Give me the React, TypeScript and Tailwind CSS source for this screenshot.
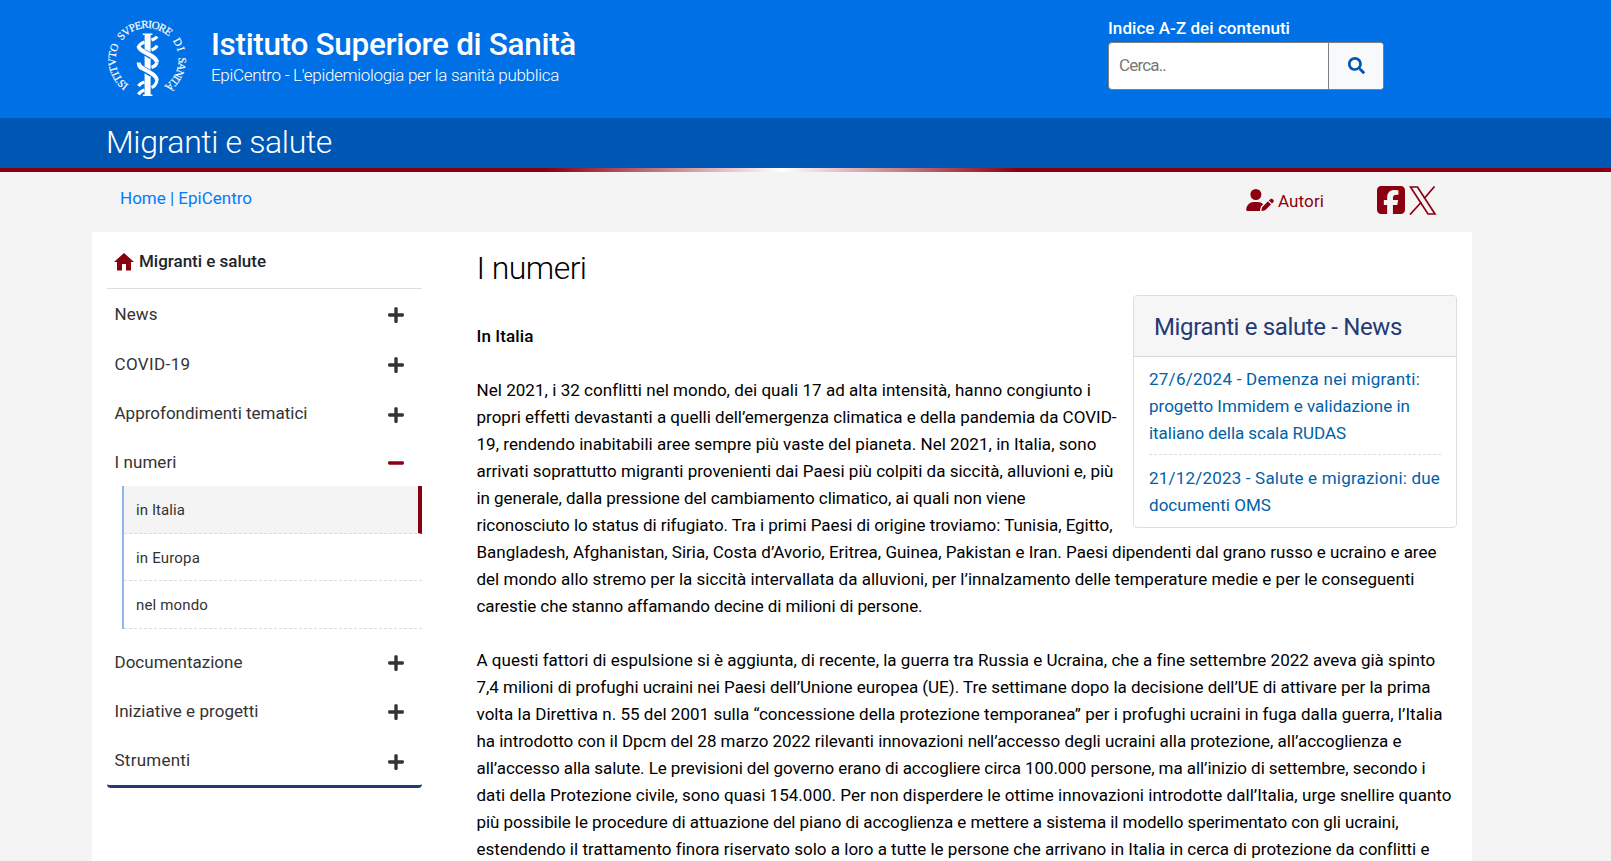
import { useLayoutEffect, useRef, useState, type ReactNode } from "react";
import { FaSearch, FaPlus, FaMinus } from "react-icons/fa";
import { FaUserPen, FaSquareFacebook } from "react-icons/fa6";

/** Single line of text whose letter spacing is tuned so that it fills `w` pixels. */
function Fit({ w, children, className = "" }: { w: number; children: string; className?: string }) {
  const ref = useRef<HTMLSpanElement>(null);
  const [spacing, setSpacing] = useState(0);
  useLayoutEffect(() => {
    const natural = ref.current!.getBoundingClientRect().width - spacing * children.length;
    setSpacing((w - natural) / children.length);
  }, [w, children]);
  return (
    <span ref={ref} className={`inline-block whitespace-pre ${className}`} style={{ letterSpacing: spacing }}>
      {children}
    </span>
  );
}

function Logo() {
  return (
    <svg width="82" height="82" viewBox="0 0 82 82" className="shrink-0 overflow-visible" fill="#fff">
      <path id="ring" fill="none" d="M22.700 67 A31.5 31.5 0 1 1 59.700 67 A31.5 31.5 0 0 1 22.700 67" />
      <text fontFamily="Liberation Serif, serif" fontSize="11" stroke="#fff" strokeWidth=".2">
        <textPath href="#ring" startOffset="0" textLength="44.5">ISTITVTO</textPath>
        <textPath href="#ring" startOffset="49.500" textLength="53.5">SVPERIORE</textPath>
        <textPath href="#ring" startOffset="108.500" textLength="12">DI</textPath>
        <textPath href="#ring" startOffset="126" textLength="34">SANITÀ</textPath>
      </text>
      <g fill="none" stroke="#fff" strokeWidth="3.2">
        <path d="M51 18.500Q50 20.500 45.500 22M38.500 24Q33.500 26 32.500 29" />
        <path d="M51 27.500Q50 30.500 45.500 32" />
        <path d="M51 44.500Q50 48 45.500 49.500M38.500 50Q33 52 32.500 45" />
        <path d="M38.500 64Q34.500 65 32.500 68" />
        <path d="M51 62Q50 68 45.500 69.500M38.500 72Q34 73.500 32.500 76.500" />
      </g>
      <path d="M36.800 15.500h9.600v1.500h-1.800v59.500h1.800V78h-9.600v-1.500h1.800V17h-1.800z" />
      <g fill="none">
        <path stroke="#0070e6" strokeWidth="6" d="M37.500 34Q42 36 45.500 38.500M37.500 51.500Q42 53.500 45.500 56" />
        <path stroke="#fff" strokeWidth="4" d="M32.500 28C33 35 50 36 51 44.500M32.500 44.500C33 52.500 50 53.500 51 62" />
      </g>
    </svg>
  );
}

const news = [
  [
    ["27/6/2024 - Demenza nei migranti:", 271],
    ["progetto Immidem e validazione in", 261],
    ["italiano della scala RUDAS", 197],
  ],
  [
    ["21/12/2023 - Salute e migrazioni: due", 291],
    ["documenti OMS", 122],
  ],
] as [string, number][][];

const first: [string, number][] = [
  ["Nel 2021, i 32 conflitti nel mondo, dei quali 17 ad alta intensità, hanno congiunto i", 614],
  ["propri effetti devastanti a quelli dell’emergenza climatica e della pandemia da COVID-", 640],
  ["19, rendendo inabitabili aree sempre più vaste del pianeta. Nel 2021, in Italia, sono", 620],
  ["arrivati soprattutto migranti provenienti dai Paesi più colpiti da siccità, alluvioni e, più", 637],
  ["in generale, dalla pressione del cambiamento climatico, ai quali non viene", 549],
  ["riconosciuto lo status di rifugiato. Tra i primi Paesi di origine troviamo: Tunisia, Egitto,", 636],
  ["Bangladesh, Afghanistan, Siria, Costa d’Avorio, Eritrea, Guinea, Pakistan e Iran. Paesi dipendenti dal grano russo e ucraino e aree", 960],
  ["del mondo allo stremo per la siccità intervallata da alluvioni, per l’innalzamento delle temperature medie e per le conseguenti", 938],
  ["carestie che stanno affamando decine di milioni di persone.", 446],
];

const second: [string, number][] = [
  ["A questi fattori di espulsione si è aggiunta, di recente, la guerra tra Russia e Ucraina, che a fine settembre 2022 aveva già spinto", 958],
  ["7,4 milioni di profughi ucraini nei Paesi dell’Unione europea (UE). Tre settimane dopo la decisione dell’UE di attivare per la prima", 954],
  ["volta la Direttiva n. 55 del 2001 sulla “concessione della protezione temporanea” per i profughi ucraini in fuga dalla guerra, l’Italia", 966],
  ["ha introdotto con il Dpcm del 28 marzo 2022 rilevanti innovazioni nell’accesso degli ucraini alla protezione, all’accoglienza e", 925],
  ["all’accesso alla salute. Le previsioni del governo erano di accogliere circa 100.000 persone, ma all’inizio di settembre, secondo i", 949],
  ["dati della Protezione civile, sono quasi 154.000. Per non disperdere le ottime innovazioni introdotte dall’Italia, urge snellire quanto", 975],
  ["più possibile le procedure di attuazione del piano di accoglienza e mettere a sistema il modello sperimentato con gli ucraini,", 922],
  ["estendendo il trattamento finora riservato solo a loro a tutte le persone che arrivano in Italia in cerca di protezione da conflitti e", 952],
];

function Lines({ rows }: { rows: [string, number][] }) {
  return (
    <p className="mb-[27px]">
      {rows.map(([t, w]) => (
        <span key={t} className="block h-[27px]"><Fit w={w}>{t}</Fit></span>
      ))}
    </p>
  );
}

function Item({ w, open, h, children }: { w: number; open?: boolean; h: string; children: string }) {
  return (
    <li className={`flex items-center justify-between pl-[7.500px] pr-[17px] ${h}`}>
      <Fit w={w}>{children}</Fit>
      {open ? <FaMinus className="mt-[2px] text-[18px] text-[#8a0010]" /> : <FaPlus className="mt-[2px] text-[18px]" />}
    </li>
  );
}

function Sub({ w, active, children }: { w: number; active?: boolean; children: string }) {
  return (
    <li className={`h-[47.500px] border-b border-dashed border-[#dcdcdc] pl-[12px] pt-[12px] leading-[24px] ${active ? "border-r-4 border-r-[#8a0010] bg-[#f4f4f4] [border-right-style:solid]" : ""}`}>
      <Fit w={w}>{children}</Fit>
    </li>
  );
}

function TitleBar({ children }: { children?: ReactNode }) {
  return <div className="flex h-[50px] items-center bg-[#0056b3] pb-[2px] pl-[106px] text-white">{children}</div>;
}

export default function App() {
  return (
    <div className="h-[861px] overflow-hidden bg-[#f4f4f4] font-[Roboto,sans-serif] text-[17px] leading-[27px] text-black">
      <header>
        <div className="flex h-[118px] bg-[#0070e6] text-white">
          <div className="flex pl-[106px] pt-[18px]">
            <Logo />
            <div className="ml-[23px] pt-[6px]">
              <h1 className="h-[38px] text-[31.500px] font-medium leading-[41px]"><Fit w={365}>Istituto Superiore di Sanità</Fit></h1>
              <p className="font-light"><Fit w={348}>EpiCentro - L'epidemiologia per la sanità pubblica</Fit></p>
            </div>
          </div>
          <div className="ml-auto mr-[227px] w-[276px] pt-[15px]">
            <label className="block h-[27px] font-medium"><Fit w={182}>Indice A-Z dei contenuti</Fit></label>
            <div className="flex h-[48px] overflow-hidden rounded-[4px] border border-[#7f7f7f] bg-white">
              <div className="w-[220px] border-r border-[#7f7f7f] pl-[10px] leading-[45px] text-[#777]"><Fit w={47}>Cerca..</Fit></div>
              <button className="flex flex-1 items-center justify-center bg-[#f8f9fa] pb-[2px] text-[#0056b3]"><FaSearch className="text-[17px]" /></button>
            </div>
          </div>
        </div>
        <TitleBar><span className="text-[32px] font-light"><Fit w={226}>Migranti e salute</Fit></span></TitleBar>
        <div className="h-[4px] bg-[linear-gradient(to_right,#8a0010_547px,#fff_782px,#8a0010_1017px)]" />
      </header>

      <nav className="ml-[92px] flex h-[60px] w-[1380px] text-[#8a0010]">
        <a className="pl-[28px] pt-[13px] text-[#007bff]"><Fit w={132}>Home | EpiCentro</Fit></a>
        <div className="ml-auto flex pr-[35px] pt-[14px]">
          <FaUserPen className="mt-[3px] h-[22px] w-[28px]" />
          <span className="ml-[4px] mt-[2px]"><Fit w={46}>Autori</Fit></span>
          <FaSquareFacebook className="-mt-[2px] ml-[53px] h-[32px] w-[28px]" />
          <svg viewBox="0 0 28 29" className="ml-[4px] h-[29px] w-[28px] fill-none stroke-current" strokeWidth="1.7">
            <path d="M1.500 1h7l17.500 27h-7z M25.500.5 15 12.700 M12.500 16 1 28.500" />
          </svg>
        </div>
      </nav>

      <div className="ml-[92px] flex h-[629px] w-[1380px] bg-white">
        <aside className="ml-[15px] w-[315px] shrink-0 text-[#333]">
          <div className="flex h-[57px] items-center border-b border-[#dcdfe0] pl-[7px] pt-[2px] font-medium text-[#212529]">
            <svg viewBox="0 0 20 18" className="mt-px h-[18px] w-[20px] fill-[#8a0010]">
              <path d="M10 0 20 9h-3v8.500h-5V11H8v6.500H3V9H0z" />
            </svg>
            <span className="ml-[5px]"><Fit w={127}>Migranti e salute</Fit></span>
          </div>
          <ul className="overflow-hidden rounded-[4px] border-b-[3px] border-[#243a75]">
            <Item w={43} h="h-[50px]">News</Item>
            <Item w={76} h="h-[50px]">COVID-19</Item>
            <Item w={193} h="h-[49px]">Approfondimenti tematici</Item>
            <Item w={62} h="h-[48px]" open>I numeri</Item>
            <ul className="ml-[15px] border-l-2 border-[#8fb8e8] text-[15px]">
              <Sub w={49} active>in Italia</Sub>
              <Sub w={64}>in Europa</Sub>
              <Sub w={72}>nel mondo</Sub>
            </ul>
            <Item w={128} h="h-[58px] pt-[9px]">Documentazione</Item>
            <Item w={144} h="h-[49px]">Iniziative e progetti</Item>
            <Item w={76} h="h-[49px] pt-px">Strumenti</Item>
          </ul>
        </aside>

        <main className="ml-[54.500px] w-[980.500px] shrink-0">
          <h2 className="h-[63px] pt-[16px] text-[32px] font-light leading-[40px]"><Fit w={110}>I numeri</Fit></h2>
          <section className="float-right w-[324px] overflow-hidden rounded-[4px] border border-[#dcdfe0]">
            <h3 className="h-[61px] border-b border-[#d8d8d8] bg-[#f6f6f6] pl-[20px] pt-[15px] text-[24px] leading-[33px] text-[#243a75]"><Fit w={248}>Migranti e salute - News</Fit></h3>
            <ul className="px-[15px] pb-[8px] text-[#0060a8]">
              {news.map((rows, i) => (
                <li key={i} className={i ? "pt-[10px]" : "border-b border-dashed border-[#dcdcdc] pb-[7px] pt-[9px]"}>
                  {rows.map(([t, w]) => <div key={t} className="h-[27px]"><Fit w={w}>{t}</Fit></div>)}
                </li>
              ))}
            </ul>
          </section>
          <p className="pb-[27px] pt-[28px] font-medium"><Fit w={57}>In Italia</Fit></p>
          <Lines rows={first} />
          <Lines rows={second} />
        </main>
      </div>
    </div>
  );
}
